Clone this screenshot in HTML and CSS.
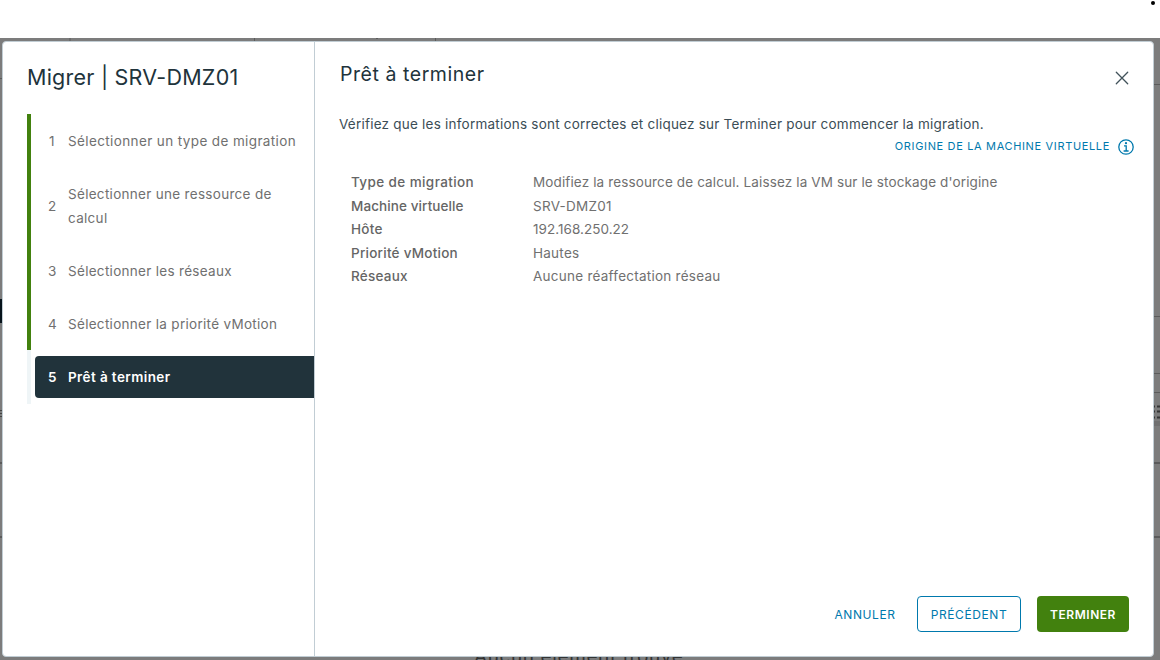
FILE: index.html
```html
<!DOCTYPE html>
<html lang="fr">
<head>
<meta charset="utf-8">
<title>Migrer | SRV-DMZ01</title>
<link rel="stylesheet" href="styles.css">
</head>
<body>
<div class="top"><span class="bullet"></span></div>
<div class="backdrop">
  <svg class="behind" width="1160" height="622" viewBox="0 38 1160 622">
    <g fill="#5b5b5b">
      <rect x="69" y="38" width="2" height="3" opacity=".5"/><rect x="254" y="38" width="1" height="3"/><rect x="376" y="38" width="2" height="1"/><rect x="435" y="38" width="1" height="3"/>
      <rect x="0" y="78" width="2" height="1"/><rect x="0" y="462" width="2" height="2"/><rect x="0" y="536" width="2" height="2"/>
      <rect x="1154" y="84" width="6" height="1"/><rect x="1154" y="316" width="6" height="1"/><rect x="1154" y="373" width="6" height="1"/><rect x="1154" y="392" width="6" height="1"/><rect x="1154" y="462" width="6" height="2"/><rect x="1154" y="536" width="6" height="2"/>
    </g>
    <rect x="0" y="299" width="2" height="24" fill="#07131b"/>
    <rect x="1154" y="421" width="6" height="5" fill="#707070"/>
    <path d="M0 410.500h2M0 413.500h2M0 416.500h2" stroke="#444"/>
    <path d="M1154 406.500h1M1157 406.500h3M1154 411.500h1M1157 411.500h3M1154 417.500h1M1157 417.500h3" stroke="#353535" stroke-width="2"/>
  </svg>
  <div class="empty">Aucun élément trouvé</div>
  <main class="modal">
    <aside class="side">
      <h1 class="title">Migrer | SRV-DMZ01</h1>
      <ol class="steps">
        <li class="step s1"><span class="num">1</span><span>Sélectionner un type de migration</span></li>
        <li class="step tall"><span class="num">2</span><span>Sélectionner une ressource de<br>calcul</span></li>
        <li class="step"><span class="num">3</span><span>Sélectionner les réseaux</span></li>
        <li class="step"><span class="num">4</span><span>Sélectionner la priorité vMotion</span></li>
        <li class="step current"><div class="pill"><span class="num">5</span><span>Prêt à terminer</span></div></li>
      </ol>
    </aside>
    <section class="content">
      <header class="head">
        <h2 class="heading">Prêt à terminer</h2>
        <svg class="close" width="14" height="14" viewBox="0 0 14 14"><path d="M1.300 1.300l11.400 11.400M12.700 1.300L1.300 12.700" fill="none" stroke="#41525a" stroke-width="1.300" stroke-linecap="round"/></svg>
      </header>
      <p class="intro">Vérifiez que les informations sont correctes et cliquez sur Terminer pour commencer la migration.</p>
      <div class="origin"><span>ORIGINE DE LA MACHINE VIRTUELLE</span>
        <svg width="16" height="16" viewBox="0 0 16 16" fill="none" stroke="#0079ad" stroke-width="1.300"><circle cx="8" cy="8" r="7.200"/><path d="M6 6.800h2.200v5M5.600 12h5"/><circle cx="8" cy="4.200" r="1.100" fill="#0079ad" stroke="none"/></svg>
      </div>
      <dl class="info">
        <dt class="k1">Type de migration</dt><dd class="v1">Modifiez la ressource de calcul. Laissez la VM sur le stockage d'origine</dd>
        <dt class="k2">Machine virtuelle</dt><dd>SRV-DMZ01</dd>
        <dt>Hôte</dt><dd class="v3">192.168.250.22</dd>
        <dt>Priorité vMotion</dt><dd>Hautes</dd>
        <dt>Réseaux</dt><dd>Aucune réaffectation réseau</dd>
      </dl>
      <footer class="actions">
        <button class="btn link">ANNULER</button>
        <button class="btn outline">PRÉCÉDENT</button>
        <button class="btn primary">TERMINER</button>
      </footer>
    </section>
  </main>
</div>
</body>
</html>
```
FILE: styles.css
```css
* { box-sizing: border-box; }
body { margin: 0; width: 1160px; height: 660px; overflow: hidden; background: #fff; font-family: Metropolis, Inter, "Open Sans", sans-serif; font-size: 13.500px; color: #707070; }
h1, h2, p, ol, dl, dd { margin: 0; padding: 0; font-weight: 400; white-space: nowrap; }
.top { height: 38px; display: flex; justify-content: flex-end; padding: 1px 5px 0 0; }
.bullet { width: 4px; height: 4px; border-radius: 50%; background: #000; }
.backdrop { position: relative; height: 622px; padding: 3px 6px 3px 2px; background: #7c7c7c; overflow: hidden; }
.behind { position: absolute; left: 0; top: 0; }
.empty { position: absolute; left: 474px; top: 607px; font-size: 19px; line-height: 24px; letter-spacing: .6px; color: #333; white-space: nowrap; }
.modal { position: relative; display: flex; width: 1152px; height: 616px; background: #fff; border: 1px solid #c1cdd4; border-radius: 4px; overflow: hidden; }
.side { width: 312px; flex: none; border-right: 1px solid #c1cdd4; padding: 19px 0 0 24px; }
.title { height: 53px; font-size: 21.500px; line-height: 32px; letter-spacing: .24px; color: #21333b; }
.steps { list-style: none; }
.step { display: flex; align-items: center; height: 53px; padding-left: 17px; border-left: 4px solid #42810e; line-height: 24px; letter-spacing: .3px; }
.s1 { letter-spacing: .38px; }
.step.tall { height: 77px; }
.num { width: 20px; flex: none; }
.s1 .num { padding-left: 1px; }
.step.current { height: 54px; padding: 0 0 0 4px; border-color: #eff5f7; letter-spacing: .4px; }
.pill { display: flex; align-items: center; flex: 1; height: 42px; margin-bottom: 1px; padding-left: 13px; border-radius: 4px 0 0 4px; background: #21333b; color: #fff; font-weight: 600; }
.content { flex: 1; display: flex; flex-direction: column; padding: 20px 24px 24px 25px; }
.head { display: flex; justify-content: space-between; height: 50px; }
.heading { color: #21333b; font-size: 19.500px; line-height: 25px; letter-spacing: .55px; }
.close { margin-top: 9px; }
.intro { height: 26px; margin-left: -1px; line-height: 24px; letter-spacing: .225px; color: #3b4d56; }
.origin { display: flex; align-items: center; justify-content: flex-end; gap: 8px; height: 18px; margin-right: -5px; color: #0079ad; font-size: 11px; line-height: 14px; letter-spacing: .65px; }
.origin span { padding-bottom: 2px; }
.info { display: grid; grid-template-columns: 182px 1fr; grid-auto-rows: 23.500px; line-height: 23.500px; padding: 15px 0 0 11px; letter-spacing: .25px; }
.info dt { font-weight: 500; color: #656565; white-space: nowrap; }
.info .k1 { letter-spacing: .4px; }
.info .k2 { letter-spacing: .1px; }
.info .v1 { letter-spacing: .13px; }
.info .v3 { letter-spacing: .04px; }
.actions { display: flex; margin-top: auto; }
.btn { height: 36px; padding: 0; font-family: inherit; font-size: 12px; font-weight: 400; letter-spacing: .6px; border: 1px solid transparent; border-radius: 4px; background: none; color: #0079ad; white-space: nowrap; }
.link { margin-left: auto; width: 64px; margin-right: 20px; }
.outline { width: 104px; border-color: #0079ad; margin-right: 16px; }
.primary { width: 92px; background: #42810e; color: #fff; font-weight: 600; letter-spacing: .55px; }
```
